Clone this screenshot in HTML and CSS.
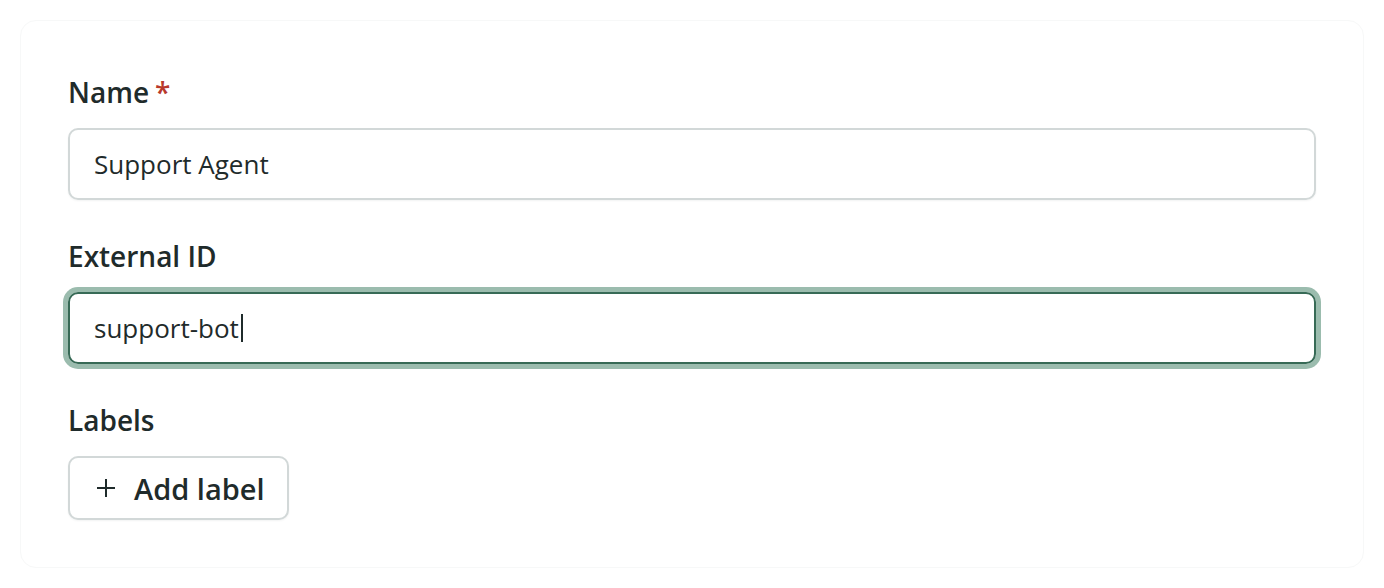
FILE: index.html
```html
<!DOCTYPE html>
<html lang="en">
<head>
<meta charset="utf-8">
<title>Agent form</title>
<link rel="stylesheet" href="styles.css">
</head>
<body>
<main class="page">
  <form class="card">
    <div class="field">
      <label class="label">Name<span class="req">*</span></label>
      <div class="input">Support Agent</div>
    </div>
    <div class="field">
      <label class="label">External ID</label>
      <div class="input focused">support-bot<span class="caret"></span></div>
    </div>
    <div class="field">
      <label class="label">Labels</label>
      <div class="row">
        <button type="button" class="btn">
          <svg class="plus" width="20" height="20" viewBox="0 0 20 20" aria-hidden="true">
            <path d="M10 1v18M1 10h18" stroke="#1f2b2b" stroke-width="2" fill="none"/>
          </svg>
          <span>Add label</span>
        </button>
      </div>
    </div>
  </form>
</main>
</body>
</html>
```
FILE: styles.css
```css
* { box-sizing: border-box; }
html, body { margin: 0; padding: 0; background: #ffffff; }
body {
  font-family: "Open Sans", Lato, "Liberation Sans", sans-serif;
  color: #1f2b2b;
}
.page { padding: 20px; }
.card {
  border: 1px solid #f7f8f8;
  border-radius: 16px;
  padding: 47px;
  display: flex;
  flex-direction: column;
  gap: 32px;
  height: 548px;
}
.field { display: flex; flex-direction: column; gap: 16px; }
.label {
  padding-top: 4px;
  font-size: 28px;
  line-height: 40px;
  font-weight: 600;
  color: #1f2b2b;
}
.req { color: #b8392c; margin-left: 6px; font-weight: 600; }
.input {
  height: 72px;
  border: 2px solid #d2d8d8;
  border-radius: 10px;
  padding: 0 24px;
  font-size: 26px;
  display: flex;
  align-items: center;
  box-shadow: 0 1px 2px rgba(30, 50, 50, 0.06);
  color: #1f2b2b;
}
.input.focused {
  border-color: #376a56;
  box-shadow: 0 0 0 5px #9bbcae;
}
.caret {
  display: inline-block;
  width: 2px;
  height: 28px;
  background: #1f2b2b;
  margin-left: 2px;
}
.row { display: flex; }
.btn {
  height: 64px;
  padding: 0 22px 0 26px;
  border: 2px solid #d2d8d8;
  border-radius: 10px;
  background: #ffffff;
  display: flex;
  align-items: center;
  gap: 18px;
  font-family: inherit;
  font-size: 29px;
  font-weight: 600;
  color: #1f2b2b;
  box-shadow: 0 1px 2px rgba(30, 50, 50, 0.06);
}
.plus { display: block; }
```
